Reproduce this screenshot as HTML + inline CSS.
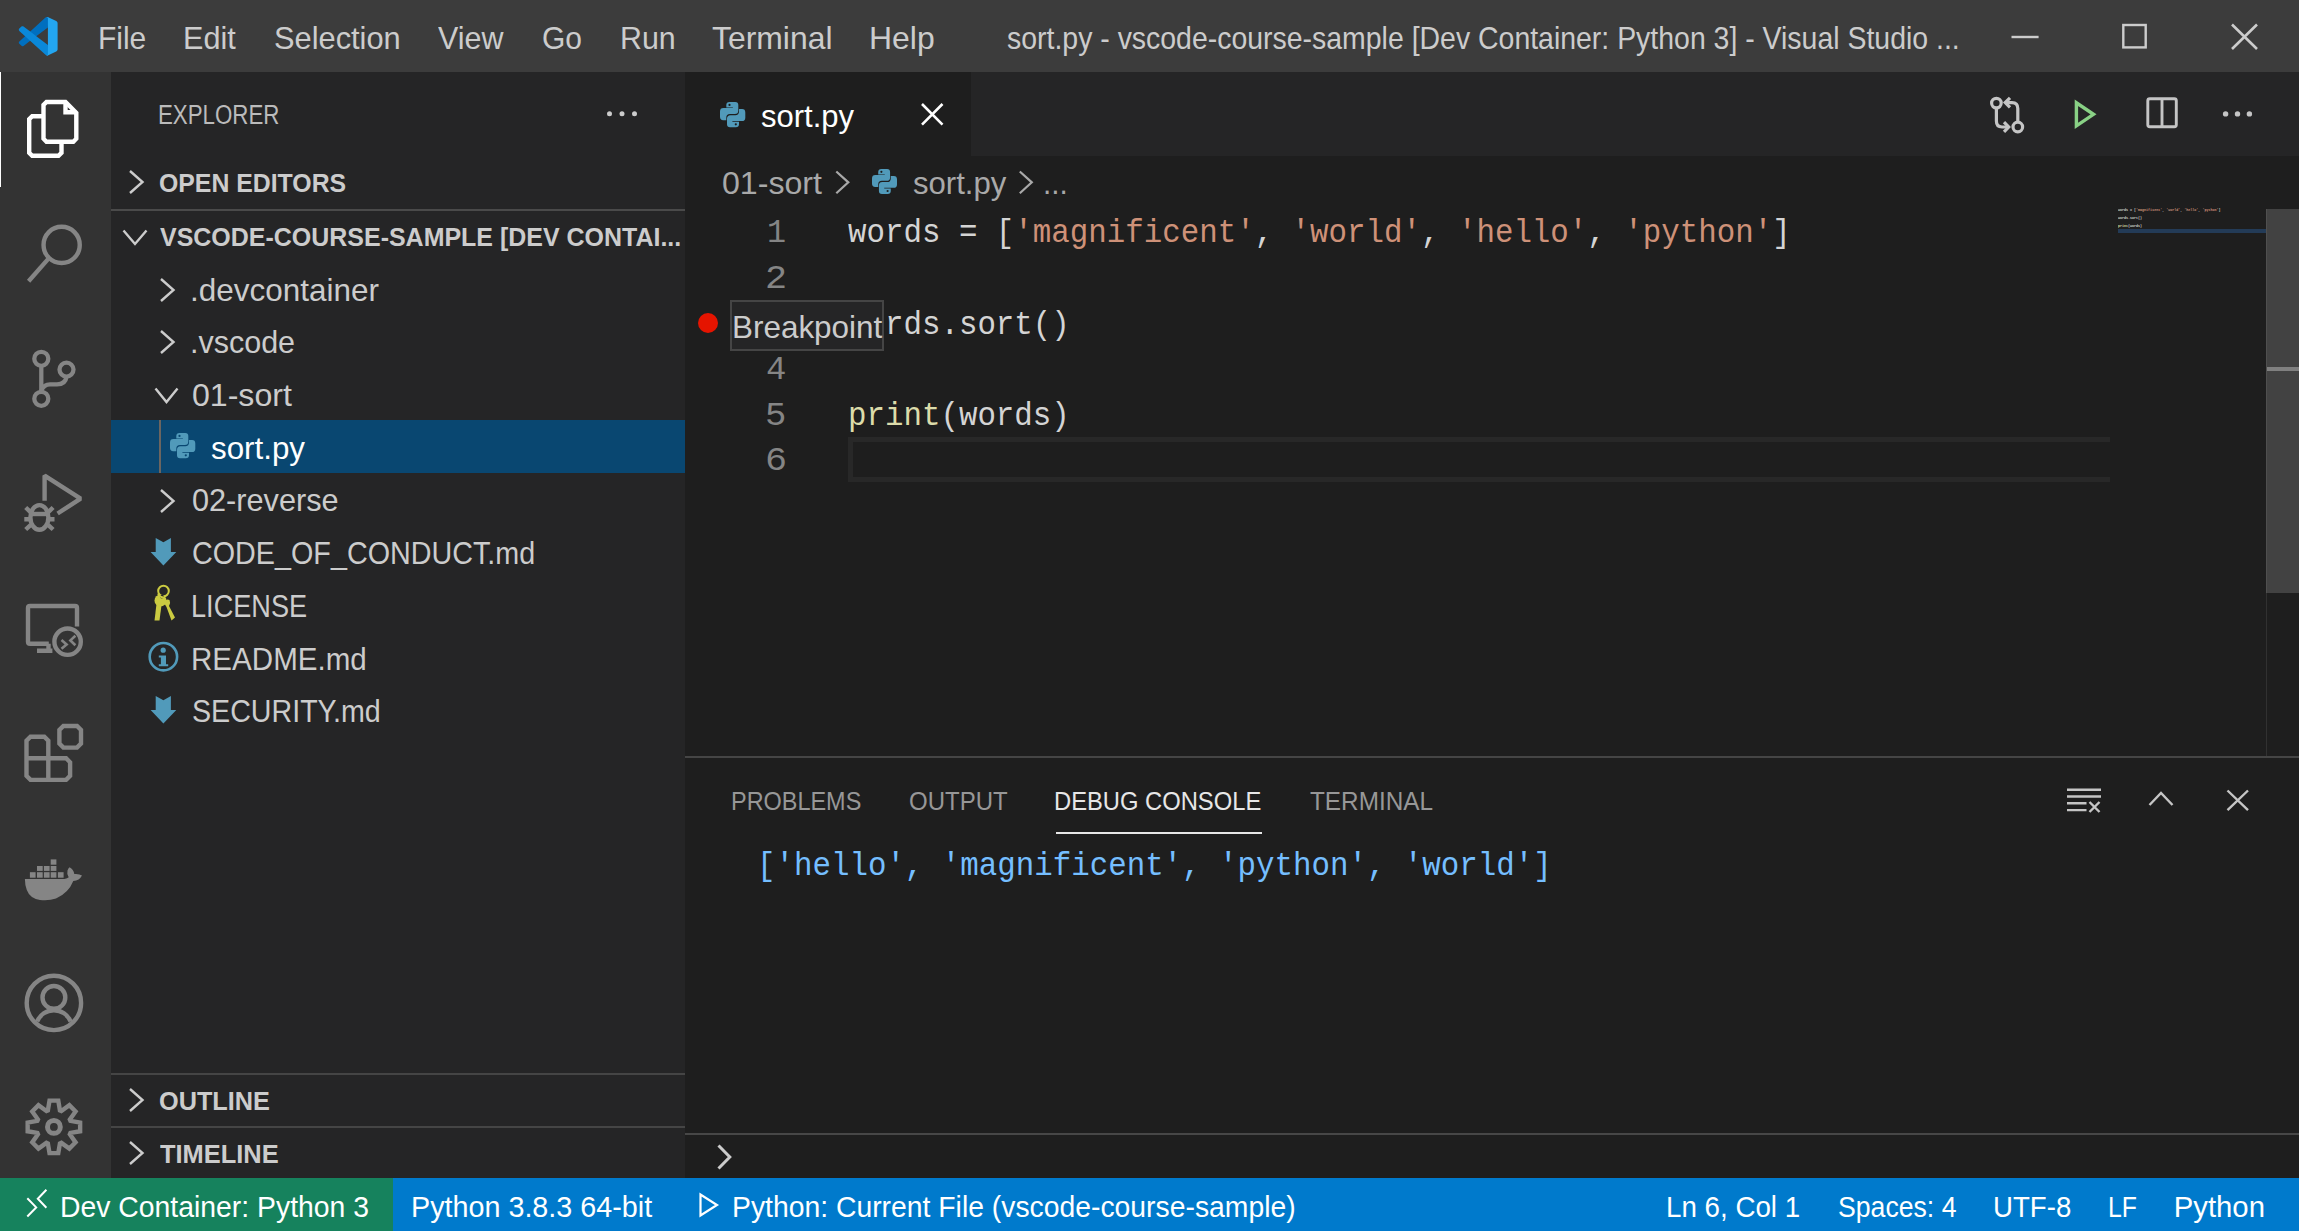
<!DOCTYPE html>
<html><head><meta charset="utf-8"><title>VS Code</title>
<style>
html,body{margin:0;padding:0;width:2299px;height:1231px;overflow:hidden;background:#1e1e1e}
.r{position:absolute}
.t{position:absolute;white-space:pre;transform-origin:0 0;-webkit-font-smoothing:antialiased}
.ov{position:absolute;left:0;top:0}
</style></head><body>
<div class="r" style="left:0px;top:0px;width:2299px;height:72px;background:#3c3c3c;"></div>
<div class="r" style="left:0px;top:72px;width:111px;height:1106px;background:#333333;"></div>
<div class="r" style="left:111px;top:72px;width:574px;height:1106px;background:#252526;"></div>
<div class="r" style="left:685px;top:72px;width:1614px;height:1106px;background:#1e1e1e;"></div>
<div class="r" style="left:685px;top:72px;width:1614px;height:84px;background:#252526;"></div>
<div class="r" style="left:685px;top:72px;width:286px;height:84px;background:#1e1e1e;"></div>
<div class="r" style="left:0px;top:1178px;width:2299px;height:53px;background:#007acc;"></div>
<div class="r" style="left:0px;top:1178px;width:393px;height:53px;background:#16825d;"></div>
<div class="r" style="left:0px;top:72px;width:1.3px;height:115px;background:#ffffff;"></div>
<div class="r" style="left:111px;top:209px;width:574px;height:2px;background:#4a4a4a;"></div>
<div class="r" style="left:111px;top:1073px;width:574px;height:2px;background:#454545;"></div>
<div class="r" style="left:111px;top:1126px;width:574px;height:2px;background:#454545;"></div>
<div class="r" style="left:111px;top:420px;width:574px;height:53px;background:#094771;"></div>
<div class="r" style="left:159px;top:420px;width:2px;height:53px;background:#6b6560;"></div>
<div class="r" style="left:848px;top:437px;width:1262px;height:45px;box-sizing:border-box;border:5px solid #282828;border-right:none"></div>
<div class="r" style="left:2118px;top:229px;width:148px;height:4px;background:#233b57;"></div>
<div class="r" style="left:2266px;top:209px;width:33px;height:384px;background:#424242;"></div>
<div class="r" style="left:2266px;top:209px;width:1px;height:384px;background:#4f4f4f;"></div>
<div class="r" style="left:2266px;top:593px;width:1px;height:163px;background:#313131;"></div>
<div class="r" style="left:2267px;top:367px;width:32px;height:4px;background:#808080;"></div>
<div class="r" style="left:685px;top:756px;width:1614px;height:2px;background:#454545;"></div>
<div class="r" style="left:1056px;top:832px;width:206px;height:2px;background:#e7e7e7;"></div>
<div class="r" style="left:685px;top:1133px;width:1614px;height:2px;background:#474747;"></div>
<div class="r" style="left:730px;top:300px;width:154px;height:51px;box-sizing:border-box;background:#252526;border:2px solid #454545"></div>
<div class="r" style="left:698px;top:313px;width:20px;height:20px;border-radius:50%;background:#e51400"></div>
<div class="t" style="left:98.26px;top:21.80px;font-size:32px;line-height:32px;color:#cccccc;font-family:'Liberation Sans', sans-serif;font-weight:400;transform:scaleX(0.9361);">File</div>
<div class="t" style="left:183.41px;top:21.80px;font-size:32px;line-height:32px;color:#cccccc;font-family:'Liberation Sans', sans-serif;font-weight:400;transform:scaleX(0.9562);">Edit</div>
<div class="t" style="left:274.26px;top:21.80px;font-size:32px;line-height:32px;color:#cccccc;font-family:'Liberation Sans', sans-serif;font-weight:400;transform:scaleX(0.9625);">Selection</div>
<div class="t" style="left:438.36px;top:21.80px;font-size:32px;line-height:32px;color:#cccccc;font-family:'Liberation Sans', sans-serif;font-weight:400;transform:scaleX(0.9513);">View</div>
<div class="t" style="left:542.09px;top:21.80px;font-size:32px;line-height:32px;color:#cccccc;font-family:'Liberation Sans', sans-serif;font-weight:400;transform:scaleX(0.9375);">Go</div>
<div class="t" style="left:619.63px;top:21.80px;font-size:32px;line-height:32px;color:#cccccc;font-family:'Liberation Sans', sans-serif;font-weight:400;transform:scaleX(0.9493);">Run</div>
<div class="t" style="left:712.25px;top:21.80px;font-size:32px;line-height:32px;color:#cccccc;font-family:'Liberation Sans', sans-serif;font-weight:400;transform:scaleX(0.9966);">Terminal</div>
<div class="t" style="left:869.30px;top:21.80px;font-size:32px;line-height:32px;color:#cccccc;font-family:'Liberation Sans', sans-serif;font-weight:400;transform:scaleX(0.9984);">Help</div>
<div class="t" style="left:1006.51px;top:21.80px;font-size:32px;line-height:32px;color:#cccccc;font-family:'Liberation Sans', sans-serif;font-weight:400;transform:scaleX(0.8888);">sort.py - vscode-course-sample [Dev Container: Python 3] - Visual Studio ...</div>
<div class="t" style="left:158.14px;top:101.55px;font-size:27px;line-height:27px;color:#bbbbbb;font-family:'Liberation Sans', sans-serif;font-weight:400;transform:scaleX(0.8258);">EXPLORER</div>
<div class="t" style="left:159.06px;top:169.56px;font-size:26.4px;line-height:26.4px;color:#cccccc;font-family:'Liberation Sans', sans-serif;font-weight:700;transform:scaleX(0.9406);">OPEN EDITORS</div>
<div class="t" style="left:159.76px;top:223.56px;font-size:26.4px;line-height:26.4px;color:#cccccc;font-family:'Liberation Sans', sans-serif;font-weight:700;transform:scaleX(0.9463);">VSCODE-COURSE-SAMPLE [DEV CONTAI...</div>
<div class="t" style="left:190.06px;top:274.74px;font-size:31.6px;line-height:31.6px;color:#cccccc;font-family:'Liberation Sans', sans-serif;font-weight:400;transform:scaleX(0.9957);">.devcontainer</div>
<div class="t" style="left:190.35px;top:326.94px;font-size:31.6px;line-height:31.6px;color:#cccccc;font-family:'Liberation Sans', sans-serif;font-weight:400;transform:scaleX(0.9646);">.vscode</div>
<div class="t" style="left:191.73px;top:379.94px;font-size:31.6px;line-height:31.6px;color:#cccccc;font-family:'Liberation Sans', sans-serif;font-weight:400;transform:scaleX(1.0155);">01-sort</div>
<div class="t" style="left:211.01px;top:432.74px;font-size:31.6px;line-height:31.6px;color:#ffffff;font-family:'Liberation Sans', sans-serif;font-weight:400;transform:scaleX(0.9914);">sort.py</div>
<div class="t" style="left:191.79px;top:485.44px;font-size:31.6px;line-height:31.6px;color:#cccccc;font-family:'Liberation Sans', sans-serif;font-weight:400;transform:scaleX(0.9703);">02-reverse</div>
<div class="t" style="left:191.64px;top:538.34px;font-size:31.6px;line-height:31.6px;color:#cccccc;font-family:'Liberation Sans', sans-serif;font-weight:400;transform:scaleX(0.9095);">CODE_OF_CONDUCT.md</div>
<div class="t" style="left:190.85px;top:590.94px;font-size:31.6px;line-height:31.6px;color:#cccccc;font-family:'Liberation Sans', sans-serif;font-weight:400;transform:scaleX(0.8588);">LICENSE</div>
<div class="t" style="left:190.66px;top:643.54px;font-size:31.6px;line-height:31.6px;color:#cccccc;font-family:'Liberation Sans', sans-serif;font-weight:400;transform:scaleX(0.9357);">README.md</div>
<div class="t" style="left:191.64px;top:696.04px;font-size:31.6px;line-height:31.6px;color:#cccccc;font-family:'Liberation Sans', sans-serif;font-weight:400;transform:scaleX(0.9058);">SECURITY.md</div>
<div class="t" style="left:159.04px;top:1088.06px;font-size:26.4px;line-height:26.4px;color:#cccccc;font-family:'Liberation Sans', sans-serif;font-weight:700;transform:scaleX(0.9581);">OUTLINE</div>
<div class="t" style="left:159.76px;top:1140.56px;font-size:26.4px;line-height:26.4px;color:#cccccc;font-family:'Liberation Sans', sans-serif;font-weight:700;transform:scaleX(0.9633);">TIMELINE</div>
<div class="t" style="left:761.02px;top:101.34px;font-size:31.6px;line-height:31.6px;color:#ffffff;font-family:'Liberation Sans', sans-serif;font-weight:400;transform:scaleX(0.9818);">sort.py</div>
<div class="t" style="left:722.43px;top:168.44px;font-size:31.6px;line-height:31.6px;color:#a9a9a9;font-family:'Liberation Sans', sans-serif;font-weight:400;transform:scaleX(1.0166);">01-sort</div>
<div class="t" style="left:913.02px;top:168.44px;font-size:31.6px;line-height:31.6px;color:#a9a9a9;font-family:'Liberation Sans', sans-serif;font-weight:400;transform:scaleX(0.9840);">sort.py</div>
<div class="t" style="left:1043.42px;top:168.44px;font-size:31.6px;line-height:31.6px;color:#a9a9a9;font-family:'Liberation Sans', sans-serif;font-weight:400;transform:scaleX(0.9398);">...</div>
<div class="t" style="left:766.83px;top:217.42px;font-size:33px;line-height:33px;color:#858585;font-family:'Liberation Mono', monospace;font-weight:400;transform:scaleX(0.9625);">1</div>
<div class="t" style="left:764.89px;top:263.02px;font-size:33px;line-height:33px;color:#858585;font-family:'Liberation Mono', monospace;font-weight:400;transform:scaleX(1.1148);">2</div>
<div class="t" style="left:765.60px;top:354.22px;font-size:33px;line-height:33px;color:#858585;font-family:'Liberation Mono', monospace;font-weight:400;transform:scaleX(1.0303);">4</div>
<div class="t" style="left:765.24px;top:399.82px;font-size:33px;line-height:33px;color:#858585;font-family:'Liberation Mono', monospace;font-weight:400;transform:scaleX(1.0794);">5</div>
<div class="t" style="left:764.61px;top:445.42px;font-size:33px;line-height:33px;color:#858585;font-family:'Liberation Mono', monospace;font-weight:400;transform:scaleX(1.1148);">6</div>
<div class="t" style="left:848px;top:217.42px;font-size:33px;line-height:33px;font-family:'Liberation Mono', monospace;transform:scaleX(0.9333)"><span style="color:#d4d4d4">words = [</span><span style="color:#ce9178">'magnificent'</span><span style="color:#d4d4d4">, </span><span style="color:#ce9178">'world'</span><span style="color:#d4d4d4">, </span><span style="color:#ce9178">'hello'</span><span style="color:#d4d4d4">, </span><span style="color:#ce9178">'python'</span><span style="color:#d4d4d4">]</span></div>
<div class="t" style="left:848px;top:308.62px;font-size:33px;line-height:33px;font-family:'Liberation Mono', monospace;transform:scaleX(0.9333)"><span style="color:#d4d4d4">words.sort()</span></div>
<div class="t" style="left:848px;top:399.82px;font-size:33px;line-height:33px;font-family:'Liberation Mono', monospace;transform:scaleX(0.9333)"><span style="color:#dcdcaa">print</span><span style="color:#d4d4d4">(words)</span></div>
<div class="r" style="left:730px;top:300px;width:154px;height:51px;box-sizing:border-box;background:#252526;border:2px solid #454545"></div>
<div class="t" style="left:731.51px;top:312.04px;font-size:31.6px;line-height:31.6px;color:#cccccc;font-family:'Liberation Sans', sans-serif;font-weight:400;transform:scaleX(0.9949);">Breakpoint</div>
<div class="t" style="left:2118px;top:209px;font-size:3.6px;line-height:3.6px;font-weight:700;font-family:'Liberation Mono', monospace;transform:scaleX(0.9306)"><span style="color:#d4d4d4">words = [</span><span style="color:#ce9178">'magnificent'</span><span style="color:#d4d4d4">, </span><span style="color:#ce9178">'world'</span><span style="color:#d4d4d4">, </span><span style="color:#ce9178">'hello'</span><span style="color:#d4d4d4">, </span><span style="color:#ce9178">'python'</span><span style="color:#d4d4d4">]</span></div>
<div class="t" style="left:2118px;top:217px;font-size:3.6px;line-height:3.6px;font-weight:700;font-family:'Liberation Mono', monospace;transform:scaleX(0.9306)"><span style="color:#d4d4d4">words.sort()</span></div>
<div class="t" style="left:2118px;top:225px;font-size:3.6px;line-height:3.6px;font-weight:700;font-family:'Liberation Mono', monospace;transform:scaleX(0.9306)"><span style="color:#dcdcaa">print</span><span style="color:#d4d4d4">(words)</span></div>
<div class="t" style="left:731.20px;top:788.36px;font-size:26.4px;line-height:26.4px;color:#979797;font-family:'Liberation Sans', sans-serif;font-weight:400;transform:scaleX(0.8883);">PROBLEMS</div>
<div class="t" style="left:908.86px;top:788.36px;font-size:26.4px;line-height:26.4px;color:#979797;font-family:'Liberation Sans', sans-serif;font-weight:400;transform:scaleX(0.9093);">OUTPUT</div>
<div class="t" style="left:1053.97px;top:788.36px;font-size:26.4px;line-height:26.4px;color:#e7e7e7;font-family:'Liberation Sans', sans-serif;font-weight:400;transform:scaleX(0.9001);">DEBUG CONSOLE</div>
<div class="t" style="left:1309.54px;top:788.36px;font-size:26.4px;line-height:26.4px;color:#979797;font-family:'Liberation Sans', sans-serif;font-weight:400;transform:scaleX(0.9213);">TERMINAL</div>
<div class="t" style="left:757px;top:849.82px;font-size:33px;line-height:33px;font-family:'Liberation Mono', monospace;transform:scaleX(0.9333)"><span style="color:#75beff">['hello', 'magnificent', 'python', 'world']</span></div>
<div class="t" style="left:60.42px;top:1191.89px;font-size:29.3px;line-height:29.3px;color:#ffffff;font-family:'Liberation Sans', sans-serif;font-weight:400;transform:scaleX(0.9681);">Dev Container: Python 3</div>
<div class="t" style="left:411.29px;top:1191.89px;font-size:29.3px;line-height:29.3px;color:#ffffff;font-family:'Liberation Sans', sans-serif;font-weight:400;transform:scaleX(0.9805);">Python 3.8.3 64-bit</div>
<div class="t" style="left:731.52px;top:1191.89px;font-size:29.3px;line-height:29.3px;color:#ffffff;font-family:'Liberation Sans', sans-serif;font-weight:400;transform:scaleX(0.9670);">Python: Current File (vscode-course-sample)</div>
<div class="t" style="left:1666.47px;top:1191.89px;font-size:29.3px;line-height:29.3px;color:#ffffff;font-family:'Liberation Sans', sans-serif;font-weight:400;transform:scaleX(0.9466);">Ln 6, Col 1</div>
<div class="t" style="left:1837.76px;top:1191.89px;font-size:29.3px;line-height:29.3px;color:#ffffff;font-family:'Liberation Sans', sans-serif;font-weight:400;transform:scaleX(0.9094);">Spaces: 4</div>
<div class="t" style="left:1993.18px;top:1191.89px;font-size:29.3px;line-height:29.3px;color:#ffffff;font-family:'Liberation Sans', sans-serif;font-weight:400;transform:scaleX(0.9426);">UTF-8</div>
<div class="t" style="left:2108.10px;top:1191.89px;font-size:29.3px;line-height:29.3px;color:#ffffff;font-family:'Liberation Sans', sans-serif;font-weight:400;transform:scaleX(0.8455);">LF</div>
<div class="t" style="left:2173.75px;top:1191.89px;font-size:29.3px;line-height:29.3px;color:#ffffff;font-family:'Liberation Sans', sans-serif;font-weight:400;transform:scaleX(1.0000);">Python</div>
<svg class="ov" width="2299" height="1231" viewBox="0 0 2299 1231"><g transform="translate(18.8 16.8) scale(0.388)"><path d="M68.77 2.08 C70.65 0.21 73.49 -0.27 75.87 0.87 L75 27.3 L29.36 61.96 L12.19 74.99 C10.59 76.2 8.35 76.1 6.87 74.75 L1.36 69.75 C-0.45 68.09 -0.45 65.24 1.36 63.58 Z" fill="#006fbf"/><path d="M12.19 25.01 L29.36 38.04 L45.11 50 L75 72.7 L75.87 99.13 C74.28 99.89 72.49 99.93 70.91 99.32 C70.12 99.01 69.39 98.54 68.77 97.92 L1.36 36.42 C-0.45 34.76 -0.45 31.91 1.36 30.25 L6.87 25.25 C8.35 23.9 10.59 23.8 12.19 25.01 Z" fill="#0a88d9"/><path d="M75.87 99.13 L96.46 89.22 C98.62 88.18 100 85.99 100 83.59 V16.41 C100 14.01 98.62 11.82 96.46 10.78 L75.87 0.87 C74.2 0.07 72.3 0.05 70.5 0.8 L75 2.5 V97.5 L70.5 99.2 C72.3 99.95 74.2 99.93 75.87 99.13 Z" fill="#23a6f1"/></g><line x1="2011.5" y1="37" x2="2038.6" y2="37" stroke="#cccccc" stroke-width="2.4"/><rect x="2123.3" y="25" width="22.4" height="22.4" fill="none" stroke="#cccccc" stroke-width="2.4"/><path d="M2232 24.5 L2257 49 M2257 24.5 L2232 49" stroke="#cccccc" stroke-width="2.6"/><g fill="none" stroke="#ffffff" stroke-width="4.4" stroke-linejoin="miter"><path d="M46.5 102 H65.5 L76.3 112.8 V138.7 L73.3 141.7 H46.5 L43.5 138.7 V105 Z"/><path d="M65.5 102 V112.3 H76.3"/><path d="M43.5 116.2 H32.2 L29.2 119.2 V152.8 L32.2 155.8 H58.5 L61.5 152.8 V141.7"/></g><g fill="none" stroke="#858585" stroke-width="4.4"><circle cx="61.65" cy="244.9" r="18.1"/><path d="M48.5 258.6 L28.6 281.3"/></g><g fill="none" stroke="#858585" stroke-width="4.3"><circle cx="41.3" cy="358.8" r="7"/><circle cx="66.5" cy="369.6" r="7"/><circle cx="41.3" cy="398.8" r="7"/><path d="M41.3 365.8 V391.8"/><path d="M66.5 376.6 Q65.5 384.3 57 384.3 L50 384.3 Q44 384.3 41.3 390.5"/></g><g fill="none" stroke="#858585" stroke-width="4.4" stroke-linejoin="bevel"><path d="M44.6 500.7 V475.6 L80.6 498.7 L57.6 513.5"/><ellipse cx="39.4" cy="517.4" rx="9" ry="12.3"/><path d="M30.5 514 H48.3"/><path d="M25.7 507.5 L30.8 512.3 M53.1 507.5 L48 512.3 M24.3 519.2 H29.5 M49.3 519.2 H54.5 M25.7 529.5 L30.8 524.8 M53.1 529.5 L48 524.8"/></g><g fill="none" stroke="#858585" stroke-width="4.4"><path d="M77 626.4 V608 Q77 606 75 606 H30 Q28 606 28 608 V641.7 Q28 643.7 30 643.7 H48.8"/><path d="M37 650.8 H52.4 M48.5 643.7 V650.8"/><circle cx="67.6" cy="641.7" r="13.2"/></g><path d="M61.5 640 L66.6 644.4 L61.5 648.8 M75.4 635.8 L70.4 640.4 L75.4 645.2" fill="none" stroke="#858585" stroke-width="2.6"/><g fill="none" stroke="#858585" stroke-width="4.4" stroke-linejoin="miter"><path d="M30.5 736.7 H44.3 L48.3 740.7 V758.3 H66.1 L70.1 762.3 V775.9 L66.1 779.9 H30.5 L26.5 775.9 V740.7 Z"/><path d="M26.5 758.3 H48.3 V779.9"/><path d="M63.4 726 H77 L81 730 V743.6 L77 747.6 H63.4 L59.4 743.6 V730 Z"/></g><g fill="#858585"><path d="M24.9 879 H64.5 Q67.5 878.5 68.7 877.2 Q66.6 873.5 67.5 870.5 Q68.3 868 69.6 867.3 Q73.5 869.5 74.3 874 Q79 873.5 82 875.5 Q79.5 880.5 73.3 881 Q68.5 893 56 898.5 Q49 901 40 900 Q30 898.5 26.8 890 Q24.9 885 24.9 879 Z"/><rect x="29.9" y="872.2" width="5.7" height="5.5"/><rect x="37" y="872.2" width="5.7" height="5.5"/><rect x="43.9" y="872.2" width="5.7" height="5.5"/><rect x="50.7" y="872.2" width="5.7" height="5.5"/><rect x="57.9" y="872.2" width="5.7" height="5.5"/><rect x="37" y="866" width="5.7" height="4.9"/><rect x="43.9" y="866" width="5.7" height="4.9"/><rect x="50.7" y="866" width="5.7" height="4.9"/><rect x="50.7" y="859.4" width="5.7" height="5.3"/></g><g fill="none" stroke="#858585" stroke-width="4.4"><circle cx="53.9" cy="1002.9" r="27.2"/><circle cx="53.9" cy="997.4" r="11.4"/><path d="M37.2 1021.5 A18 18 0 0 1 70.6 1021.5"/></g><g fill="none" stroke="#858585" stroke-width="4.4" stroke-linejoin="miter"><path d="M49.51 1100.66 L58.29 1100.66 L59.92 1110.36 L61.34 1110.95 L69.35 1105.24 L75.56 1111.45 L69.85 1119.46 L70.44 1120.88 L80.14 1122.51 L80.14 1131.29 L70.44 1132.92 L69.85 1134.34 L75.56 1142.35 L69.35 1148.56 L61.34 1142.85 L59.92 1143.44 L58.29 1153.14 L49.51 1153.14 L47.88 1143.44 L46.46 1142.85 L38.45 1148.56 L32.24 1142.35 L37.95 1134.34 L37.36 1132.92 L27.66 1131.29 L27.66 1122.51 L37.36 1120.88 L37.95 1119.46 L32.24 1111.45 L38.45 1105.24 L46.46 1110.95 L47.88 1110.36 Z"/><circle cx="53.9" cy="1126.9" r="6.4" stroke-width="5"/></g><g fill="#cccccc"><circle cx="609.5" cy="113.8" r="2.5"/><circle cx="622" cy="113.8" r="2.5"/><circle cx="634.5" cy="113.8" r="2.5"/></g><path d="M130 171 L142.5 182.0 L130 193" fill="none" stroke="#cccccc" stroke-width="2.4"/><path d="M123.5 230.5 L135.0 244 L146.5 230.5" fill="none" stroke="#cccccc" stroke-width="2.4"/><path d="M161 279 L173.5 290.0 L161 301" fill="none" stroke="#cccccc" stroke-width="2.4"/><path d="M161 331 L173.5 342.0 L161 353" fill="none" stroke="#cccccc" stroke-width="2.4"/><path d="M155.5 388.5 L166.5 402 L177.5 388.5" fill="none" stroke="#cccccc" stroke-width="2.4"/><path d="M161 490 L173.5 501.0 L161 512" fill="none" stroke="#cccccc" stroke-width="2.4"/><path d="M130 1089 L142.5 1100.0 L130 1111" fill="none" stroke="#cccccc" stroke-width="2.4"/><path d="M130 1142 L142.5 1153.0 L130 1164" fill="none" stroke="#cccccc" stroke-width="2.4"/><g transform="translate(170 433) scale(1.0)" fill="#519aba"><path d="M6.3 3 Q6.3 0 9.5 0 L15.3 0 Q18.3 0 18.3 3 L18.3 8.5 Q18.3 12 14.8 12 L10 12 Q6.3 12 6.3 15.7 L6.3 18.2 L3.2 18.2 Q0 18.2 0 14.8 L0 9.5 Q0 6.1 3.4 6.1 L12.9 6.1 L12.9 5.5 L6.3 5.5 Z"/><path d="M6.3 3 Q6.3 0 9.5 0 L15.3 0 Q18.3 0 18.3 3 L18.3 8.5 Q18.3 12 14.8 12 L10 12 Q6.3 12 6.3 15.7 L6.3 18.2 L3.2 18.2 Q0 18.2 0 14.8 L0 9.5 Q0 6.1 3.4 6.1 L12.9 6.1 L12.9 5.5 L6.3 5.5 Z" transform="rotate(180 12.65 12.6)"/><circle cx="9.5" cy="2.9" r="1.1" fill="#094771"/><circle cx="15.8" cy="22.3" r="1.1" fill="#094771"/></g><path d="M155.7 538 L163.4 542.3 L170.9 538 V552 H176.3 L163.4 565.5 L150.6 552 H155.7 Z" fill="#519aba"/><path d="M155.7 696 L163.4 700.3 L170.9 696 V710 H176.3 L163.4 723.5 L150.6 710 H155.7 Z" fill="#519aba"/><g fill="#cbcb41"><circle cx="163.5" cy="591" r="5.3" fill="none" stroke="#cbcb41" stroke-width="2"/><path d="M164 603 Q166 598 169.5 600 Q171 603 169 606 L175 617.5 L171.5 620.5 L166.5 607 Z"/><circle cx="160.5" cy="600.5" r="6"/><path d="M156.5 604 L161.5 605 L159.5 620.5 L154.5 620.5 Z"/><circle cx="161.8" cy="596.5" r="2" fill="#252526"/><path d="M158 593.5 Q160.5 598 164.5 597.5" fill="none" stroke="#cbcb41" stroke-width="2"/></g><g fill="#519aba"><circle cx="163.4" cy="656.7" r="13.7" fill="none" stroke="#519aba" stroke-width="2.6"/><circle cx="163.2" cy="650.2" r="2.6"/><path d="M158.8 655.5 H166 V664.3 H168.2 V666.3 H158.8 V664.3 H160.9 V657.5 H158.8 Z"/></g><g transform="translate(720 102) scale(1.0)" fill="#519aba"><path d="M6.3 3 Q6.3 0 9.5 0 L15.3 0 Q18.3 0 18.3 3 L18.3 8.5 Q18.3 12 14.8 12 L10 12 Q6.3 12 6.3 15.7 L6.3 18.2 L3.2 18.2 Q0 18.2 0 14.8 L0 9.5 Q0 6.1 3.4 6.1 L12.9 6.1 L12.9 5.5 L6.3 5.5 Z"/><path d="M6.3 3 Q6.3 0 9.5 0 L15.3 0 Q18.3 0 18.3 3 L18.3 8.5 Q18.3 12 14.8 12 L10 12 Q6.3 12 6.3 15.7 L6.3 18.2 L3.2 18.2 Q0 18.2 0 14.8 L0 9.5 Q0 6.1 3.4 6.1 L12.9 6.1 L12.9 5.5 L6.3 5.5 Z" transform="rotate(180 12.65 12.6)"/><circle cx="9.5" cy="2.9" r="1.1" fill="#1e1e1e"/><circle cx="15.8" cy="22.3" r="1.1" fill="#1e1e1e"/></g><path d="M922 104 L942.5 124.6 M942.5 104 L922 124.6" stroke="#ffffff" stroke-width="2.6"/><path d="M836.3 171.5 L848.3 182.35 L836.3 193.2" fill="none" stroke="#a9a9a9" stroke-width="2.2"/><g transform="translate(872 169) scale(0.9881422924901185)" fill="#519aba"><path d="M6.3 3 Q6.3 0 9.5 0 L15.3 0 Q18.3 0 18.3 3 L18.3 8.5 Q18.3 12 14.8 12 L10 12 Q6.3 12 6.3 15.7 L6.3 18.2 L3.2 18.2 Q0 18.2 0 14.8 L0 9.5 Q0 6.1 3.4 6.1 L12.9 6.1 L12.9 5.5 L6.3 5.5 Z"/><path d="M6.3 3 Q6.3 0 9.5 0 L15.3 0 Q18.3 0 18.3 3 L18.3 8.5 Q18.3 12 14.8 12 L10 12 Q6.3 12 6.3 15.7 L6.3 18.2 L3.2 18.2 Q0 18.2 0 14.8 L0 9.5 Q0 6.1 3.4 6.1 L12.9 6.1 L12.9 5.5 L6.3 5.5 Z" transform="rotate(180 12.65 12.6)"/><circle cx="9.5" cy="2.9" r="1.1" fill="#1e1e1e"/><circle cx="15.8" cy="22.3" r="1.1" fill="#1e1e1e"/></g><path d="M1019.8 171.5 L1031.8 182.35 L1019.8 193.2" fill="none" stroke="#a9a9a9" stroke-width="2.2"/><g fill="none" stroke="#c5c5c5" stroke-width="3.2"><circle cx="1996.4" cy="103.1" r="4.8"/><circle cx="2017.8" cy="127" r="4.8"/><path d="M1996.4 108 V121 Q1996.4 127 2002 127 H2008.5"/><path d="M2004 122.2 L2008.7 127 L2004 131.8"/><path d="M2017.8 122.2 V108.6 Q2017.8 102.6 2012 102.6 H2005.5"/><path d="M2010 97.8 L2005.2 102.6 L2010 107.4"/></g><path d="M2076.4 102.8 V125.8 L2093.5 114.3 Z" fill="none" stroke="#89d185" stroke-width="3.4" stroke-linejoin="miter"/><g fill="none" stroke="#c5c5c5" stroke-width="2.9"><rect x="2147.8" y="98.7" width="28.5" height="28" rx="2"/><path d="M2162 98.7 V126.7"/></g><g fill="#c5c5c5"><circle cx="2225.6" cy="113.9" r="2.7"/><circle cx="2237.5" cy="113.9" r="2.7"/><circle cx="2249.4" cy="113.9" r="2.7"/></g><g fill="none" stroke="#c5c5c5" stroke-width="2.4"><path d="M2067 789.8 H2101 M2067 796.5 H2101 M2067 803.3 H2086.5 M2067 810.1 H2086.5"/><path d="M2089.5 802 L2099.5 812 M2099.5 802 L2089.5 812"/><path d="M2149.5 805 L2161 793 L2172.5 805"/><path d="M2227.5 790.5 L2248 810.2 M2248 790.5 L2227.5 810.2"/></g><path d="M718.5 1145.5 L729.8 1157.0 L718.5 1168.5" fill="none" stroke="#cccccc" stroke-width="3"/><path d="M27.3 1198.3 L36.2 1207.4 L27.3 1216.5 M46.4 1189.7 L37.8 1198.8 L46.4 1207.7" fill="none" stroke="#ffffff" stroke-width="2"/><path d="M700.5 1194.5 V1215.5 L717 1205 Z" fill="none" stroke="#ffffff" stroke-width="2.2" stroke-linejoin="miter"/></svg>
</body></html>
